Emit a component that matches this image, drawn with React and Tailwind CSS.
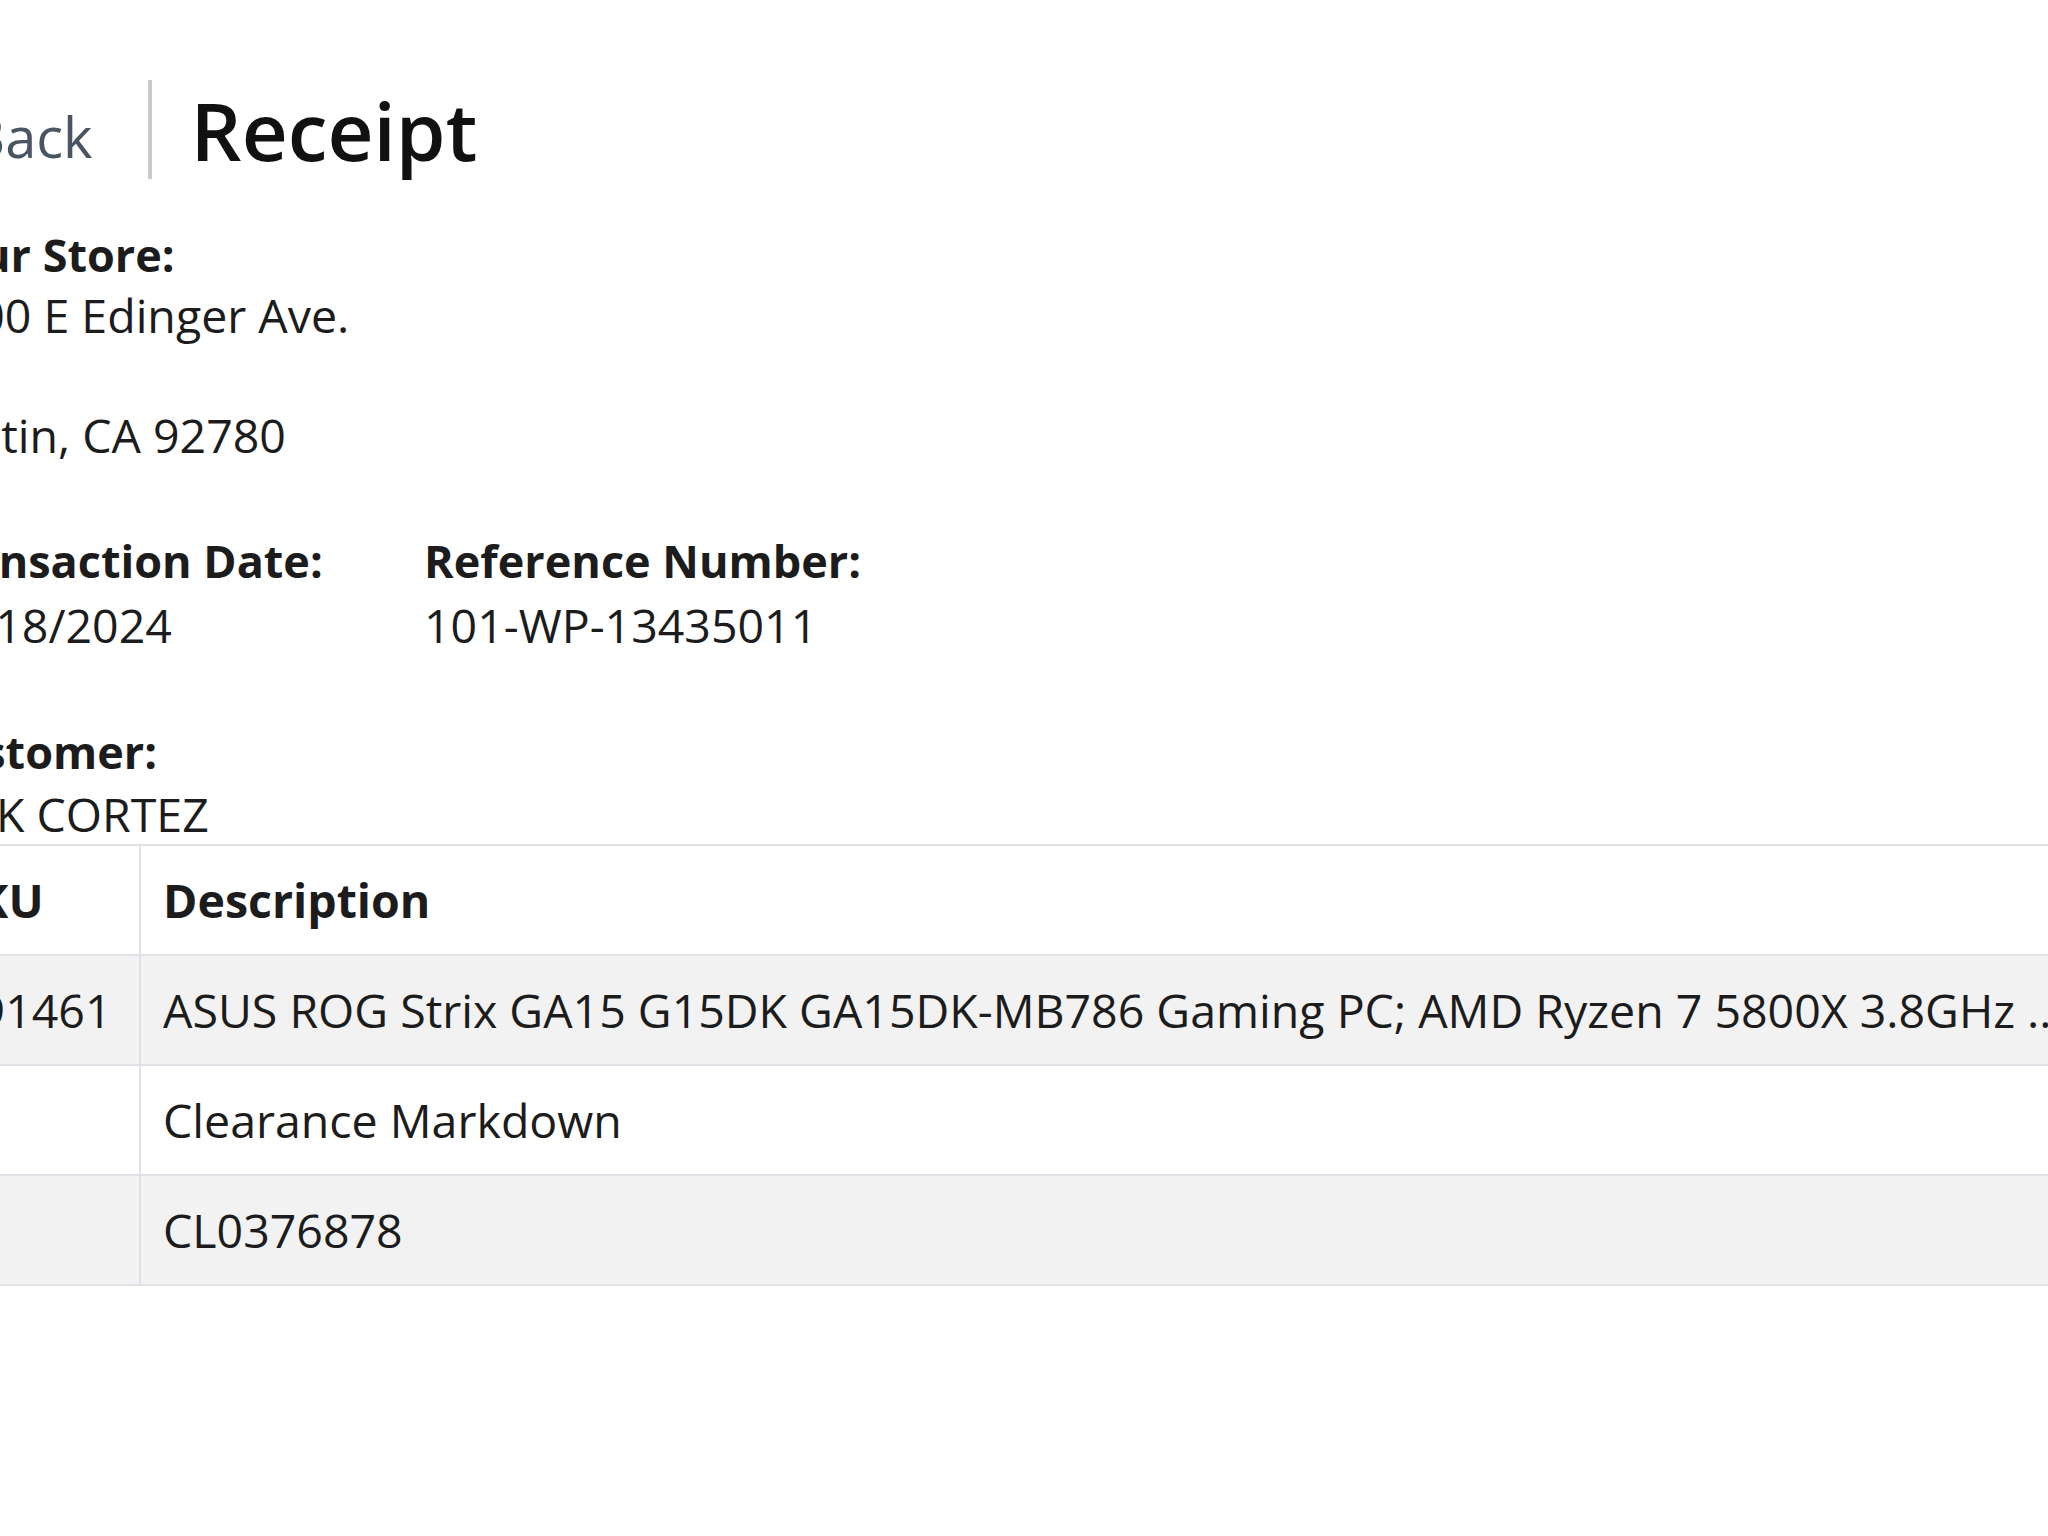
const font = { fontFamily: '"Open Sans", "Noto Sans", sans-serif' };

const rows = [
  {
    sku: "391461",
    description:
      "ASUS ROG Strix GA15 G15DK GA15DK-MB786 Gaming PC; AMD Ryzen 7 5800X 3.8GHz ...",
    shaded: true,
  },
  { sku: "", description: "Clearance Markdown", shaded: false },
  { sku: "", description: "CL0376878", shaded: true },
];

function Field({ label, children, gap = "mt-0" }) {
  return (
    <div>
      <div className="text-[45px] font-bold leading-[60px]">{label}</div>
      <div className={`leading-[60px] ${gap}`}>{children}</div>
    </div>
  );
}

function ReceiptTable() {
  return (
    <div className="w-[2400px] border-b-2 border-[#dee2e6] text-[46.5px] leading-[60px]">
      <div className="flex border-t-2 border-[#dee2e6] bg-white">
        <div className="w-[216px] shrink-0 border-r-2 border-[#dee2e6] pt-[23.5px] pb-[24.5px] pl-[27px] font-bold">
          SKU
        </div>
        <div className="flex-1 pt-[23.5px] pb-[24.5px] pl-[22px] font-bold">Description</div>
      </div>
      {rows.map((row, i) => (
        <div
          key={i}
          className={`flex border-t-2 border-[#dee2e6] ${row.shaded ? "bg-[#f2f2f2]" : "bg-white"}`}
        >
          <div className="w-[216px] shrink-0 border-r-2 border-[#dee2e6] pt-[23.5px] pb-[24.5px] pl-[27px]">
            {row.sku || "\u00a0"}
          </div>
          <div className="flex-1 whitespace-nowrap pt-[23.5px] pb-[24.5px] pl-[22px]">
            {row.description}
          </div>
        </div>
      ))}
    </div>
  );
}

export default function App() {
  return (
    <div
      className="h-[1536px] w-[2048px] overflow-hidden bg-white text-[#1c1c1c]"
      style={font}
    >
      <div className="-ml-[75px]">
        <div className="mt-[80px] flex h-[99px] items-center">
          <a className="ml-[44px] pt-[12px] text-[56px] leading-none text-[#4a5563]">
            Back
          </a>
          <div className="ml-[55px] h-[99px] w-[4px] bg-[#c9c9c9]" />
          <h1 className="ml-[39px] text-[80px] font-semibold leading-none text-[#111]">
            Receipt
          </h1>
        </div>

        <div className="mt-[46px] text-[46.5px]">
          <div className="text-[45px] font-bold leading-[60px]">Your Store:</div>
          <div className="leading-[60px]">2900 E Edinger Ave.</div>
          <div className="h-[60px]" />
          <div className="leading-[60px]">Tustin, CA 92780</div>

          <div className="mt-[66px] grid grid-cols-[499px_auto]">
            <Field label="Transaction Date:" gap="mt-[4px]">
              01/18/2024
            </Field>
            <Field label="Reference Number:" gap="mt-[4px]">
              101-WP-13435011
            </Field>
          </div>

          <div className="mt-[67px]">
            <Field label="Customer:" gap="mt-[2px]">
              RICK CORTEZ
            </Field>
          </div>
        </div>

        <ReceiptTable />
      </div>
    </div>
  );
}
